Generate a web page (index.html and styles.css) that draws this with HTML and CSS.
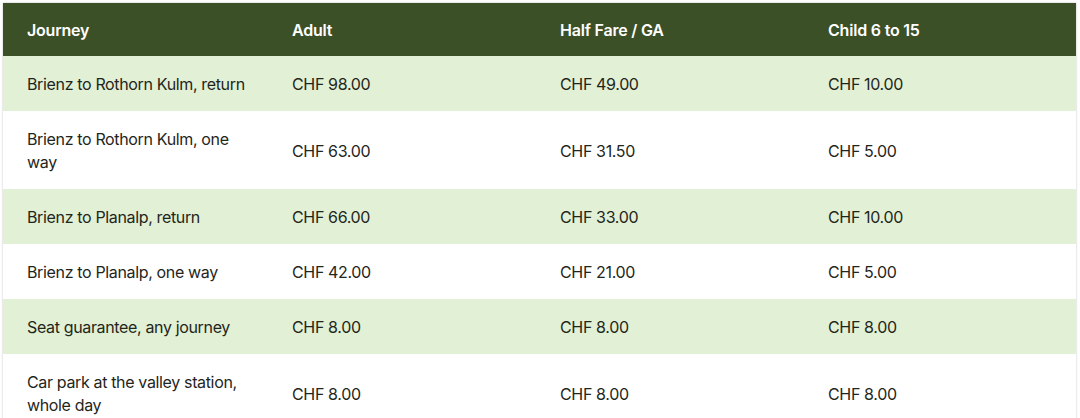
FILE: index.html
```html
<!DOCTYPE html>
<html lang="en">
<head>
<meta charset="utf-8">
<title>Fares</title>
<link rel="stylesheet" href="styles.css">
</head>
<body>
<div class="wrap">
<table class="fares">
  <colgroup>
    <col class="c1"><col class="c2"><col class="c3"><col class="c4">
  </colgroup>
  <thead>
    <tr><th>Journey</th><th>Adult</th><th>Half Fare / GA</th><th>Child 6 to 15</th></tr>
  </thead>
  <tbody>
    <tr><td>Brienz to Rothorn Kulm, return</td><td>CHF 98.00</td><td>CHF 49.00</td><td>CHF 10.00</td></tr>
    <tr><td>Brienz to Rothorn Kulm, one way</td><td>CHF 63.00</td><td>CHF 31.50</td><td>CHF 5.00</td></tr>
    <tr><td>Brienz to Planalp, return</td><td>CHF 66.00</td><td>CHF 33.00</td><td>CHF 10.00</td></tr>
    <tr><td>Brienz to Planalp, one way</td><td>CHF 42.00</td><td>CHF 21.00</td><td>CHF 5.00</td></tr>
    <tr><td>Seat guarantee, any journey</td><td>CHF 8.00</td><td>CHF 8.00</td><td>CHF 8.00</td></tr>
    <tr><td>Car park at the valley station, whole day</td><td>CHF 8.00</td><td>CHF 8.00</td><td>CHF 8.00</td></tr>
  </tbody>
</table>
</div>
</body>
</html>
```
FILE: styles.css
```css
html, body {
  margin: 0;
  padding: 0;
  background: #ffffff;
}
.wrap {
  padding: 3px 4px 0 3px;
}
.fares {
  width: 1073px;
  border-collapse: collapse;
  table-layout: fixed;
  font-family: Inter, "Liberation Sans", sans-serif;
  font-size: 16px;
  line-height: 23px;
  letter-spacing: -0.35px;
  color: #1f261b;
  box-shadow: 0 0 2px rgba(0,0,0,0.25);
}
.c1 { width: 269px; }
.c2, .c3, .c4 { width: 268px; }
.fares th {
  background: #3c5028;
  color: #ffffff;
  font-weight: 600;
  text-align: left;
  padding: 16px 20px 14px;
  letter-spacing: -0.2px;
}
.fares td {
  padding: 17px 20px 15px;
  vertical-align: middle;
}
.fares th:first-child,
.fares td:first-child {
  padding-left: 24px;
  padding-right: 20px;
}
.fares tbody tr:nth-child(odd) td {
  background: #e2f0d5;
}
```
